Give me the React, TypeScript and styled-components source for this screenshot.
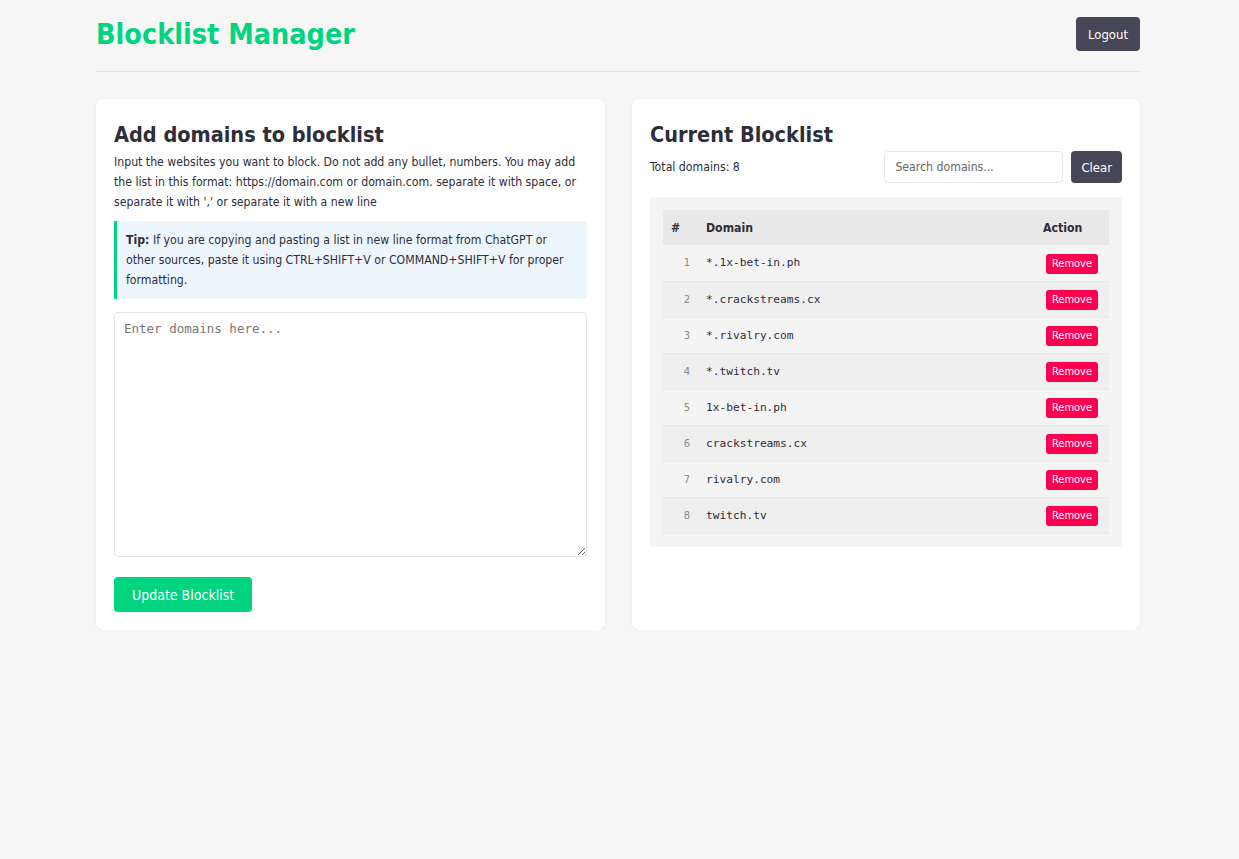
import styled, { createGlobalStyle } from 'styled-components';

const GREEN = '#00d47f';
const DARK = '#474657';
const TEXT = '#2e2d3a';
const FONT = '"DejaVu Sans Condensed", "DejaVu Sans", sans-serif';
const MONO = '"DejaVu Sans Mono", monospace';

const domains = [
  '*.1x-bet-in.ph',
  '*.crackstreams.cx',
  '*.rivalry.com',
  '*.twitch.tv',
  '1x-bet-in.ph',
  'crackstreams.cx',
  'rivalry.com',
  'twitch.tv',
];

const GlobalStyle = createGlobalStyle`
  * {
    box-sizing: border-box;
  }

  body {
    margin: 0;
    background: #f6f6f6;
    font-family: ${FONT};
    color: ${TEXT};
  }
`;

const App = () => {
  return (
    <>
      <GlobalStyle />
      <StyledPage>
        <StyledHeader>
          <StyledLogo>Blocklist Manager</StyledLogo>
          <StyledDarkButton $size="md">Logout</StyledDarkButton>
        </StyledHeader>
        <StyledGrid>
          <StyledCard>
            <StyledH2>Add domains to blocklist</StyledH2>
            <StyledDesc>
              Input the websites you want to block. Do not add any bullet, numbers. You may add the
              list in this format: https://domain.com or domain.com. separate it with space, or
              separate it with ',' or separate it with a new line
            </StyledDesc>
            <StyledTip>
              <StyledTipLabel>Tip:</StyledTipLabel> If you are copying and pasting a list in new
              line format from ChatGPT or other sources, paste it using CTRL+SHIFT+V or
              COMMAND+SHIFT+V for proper formatting.
            </StyledTip>
            <StyledTextarea placeholder="Enter domains here..." />
            <StyledGreenButton>Update Blocklist</StyledGreenButton>
          </StyledCard>

          <StyledCard>
            <StyledH2>Current Blocklist</StyledH2>
            <StyledToolbar>
              <StyledCount>Total domains: {domains.length}</StyledCount>
              <StyledSearchGroup>
                <StyledSearch placeholder="Search domains..." />
                <StyledDarkButton $size="sm">Clear</StyledDarkButton>
              </StyledSearchGroup>
            </StyledToolbar>
            <StyledTableWrap>
              <StyledTable>
                <thead>
                  <tr>
                    <StyledTh>#</StyledTh>
                    <StyledTh>Domain</StyledTh>
                    <StyledTh>Action</StyledTh>
                  </tr>
                </thead>
                <tbody>
                  {domains.map((d, i) => (
                    <StyledTr key={d} $odd={i % 2 === 1}>
                      <StyledNum>{i + 1}</StyledNum>
                      <StyledDomain>{d}</StyledDomain>
                      <StyledAction>
                        <StyledRemove>Remove</StyledRemove>
                      </StyledAction>
                    </StyledTr>
                  ))}
                </tbody>
              </StyledTable>
            </StyledTableWrap>
          </StyledCard>
        </StyledGrid>
      </StyledPage>
    </>
  );
};

export default App;

const StyledPage = styled.div`
  width: 1044px;
  margin-left: 96px;
`;

const StyledHeader = styled.header`
  display: flex;
  justify-content: space-between;
  align-items: center;
  height: 72px;
  padding-bottom: 3px;
  border-bottom: 1px solid #e6e6e6;
`;

const StyledLogo = styled.h1`
  margin: 0;
  font-family: ${FONT};
  font-size: 28.5px;
  font-weight: 700;
  color: ${GREEN};
`;

const StyledDarkButton = styled.button<{ $size: 'sm' | 'md' }>`
  height: ${(p) => (p.$size === 'md' ? '34px' : '32px')};
  padding: 0 ${(p) => (p.$size === 'md' ? '12px' : '10px')};
  border: none;
  border-radius: 4px;
  background: ${DARK};
  color: #fff;
  font-family: ${FONT};
  font-size: 13px;
  cursor: pointer;
`;

const StyledGrid = styled.div`
  display: grid;
  grid-template-columns: 509px 508px;
  gap: 27px;
  margin-top: 27px;
`;

const StyledCard = styled.section`
  display: flex;
  flex-direction: column;
  align-items: flex-start;
  height: 531px;
  padding: 22px 18px 18px;
  background: #fff;
  border-radius: 8px;
  box-shadow: 0 1px 4px rgba(0, 0, 0, 0.06);
`;

const StyledH2 = styled.h2`
  margin: 0 0 3px;
  font-family: ${FONT};
  font-size: 21.5px;
  font-weight: 700;
  line-height: 28px;
  color: ${TEXT};
`;

const StyledDesc = styled.p`
  margin: 0;
  font-size: 12.2px;
  line-height: 20px;
`;

const StyledTip = styled.div`
  width: 100%;
  margin-top: 9px;
  padding: 9px 9px;
  background: #edf6fd;
  border-left: 3px solid ${GREEN};
  border-radius: 0 4px 4px 0;
  font-size: 12.2px;
  line-height: 20px;
`;

const StyledTipLabel = styled.strong`
  font-weight: 700;
`;

const StyledTextarea = styled.textarea`
  width: 100%;
  height: 245px;
  margin-top: 13px;
  padding: 8px 9px;
  border: 1px solid #e4e4ea;
  border-radius: 4px;
  font-family: ${MONO};
  font-size: 12.5px;
  resize: vertical;

  &::placeholder {
    color: #777;
  }
`;

const StyledGreenButton = styled.button`
  height: 35px;
  margin-top: 20px;
  padding: 0 18px;
  border: none;
  border-radius: 4px;
  background: ${GREEN};
  color: #fff;
  font-family: ${FONT};
  font-size: 14px;
  cursor: pointer;
`;

const StyledToolbar = styled.div`
  display: flex;
  justify-content: space-between;
  align-items: center;
  width: 100%;
  margin-top: -1px;
`;

const StyledCount = styled.span`
  font-size: 12.2px;
`;

const StyledSearchGroup = styled.div`
  display: flex;
  gap: 8px;
`;

const StyledSearch = styled.input`
  width: 179px;
  height: 32px;
  padding: 0 10px;
  border: 1px solid #e6e6ec;
  border-radius: 4px;
  font-family: ${FONT};
  font-size: 12.2px;

  &::placeholder {
    color: #666;
  }
`;

const StyledTableWrap = styled.div`
  width: 100%;
  margin-top: 14px;
  padding: 13px;
  background: #f4f4f4;
  border-radius: 4px;
`;

const StyledTable = styled.table`
  width: 100%;
  border-collapse: collapse;
`;

const StyledTh = styled.th`
  height: 35px;
  padding: 0 8px;
  background: #e8e8e8;
  text-align: left;
  font-size: 12.2px;
  font-weight: 700;
`;

const StyledTr = styled.tr<{ $odd: boolean }>`
  height: 36px;
  background: ${(p) => (p.$odd ? '#efefef' : '#f4f4f4')};
  border-bottom: 1px solid #e8e8e8;
`;

const StyledNum = styled.td`
  width: 35px;
  padding: 0 8px 0 0;
  text-align: right;
  font-size: 11px;
  color: #888;
`;

const StyledDomain = styled.td`
  padding: 0 8px;
  font-family: ${MONO};
  font-size: 11.2px;
`;

const StyledAction = styled.td`
  width: 74px;
  padding: 0;
  text-align: center;
`;

const StyledRemove = styled.button`
  height: 20px;
  padding: 0 6px;
  border: none;
  border-radius: 3px;
  background: #ff0050;
  color: #fff;
  font-family: ${FONT};
  font-size: 11px;
  cursor: pointer;
`;
